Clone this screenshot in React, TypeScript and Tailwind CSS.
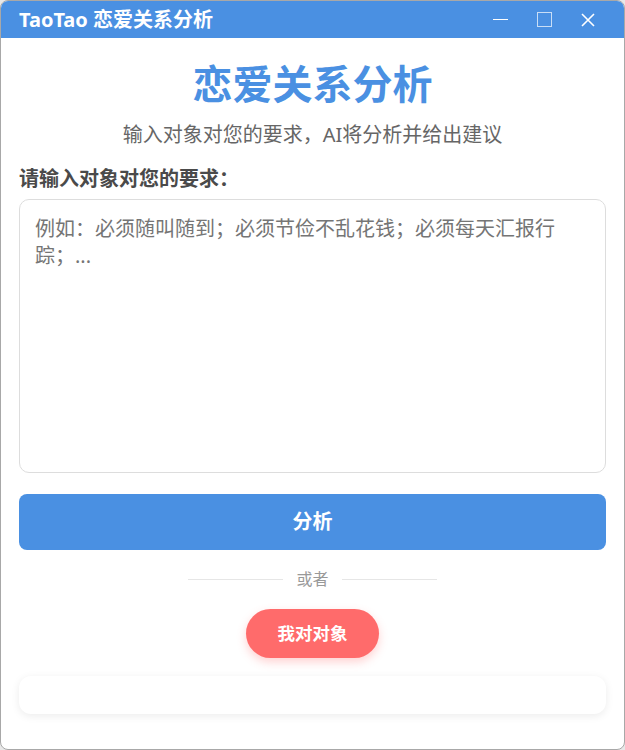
import React from 'react';

const font = { fontFamily: '"Noto Sans", "Noto Sans CJK SC", sans-serif' };

function TitleBar() {
  return (
    <div className="flex h-[37px] items-center bg-[#4a90e2] pl-[18px] pr-[14px] text-white">
      <div className="flex-1 text-[20px] font-bold leading-none">TaoTao 恋爱关系分析</div>
      <div className="flex h-full items-center">
        <div className="flex h-full w-[44px] items-center justify-center">
          <div className="h-px w-[15px] bg-white" />
        </div>
        <div className="flex h-full w-[44px] items-center justify-center">
          <div className="h-[15px] w-[15px] border border-white/70" />
        </div>
        <div className="flex h-full w-[44px] items-center justify-center">
          <svg width="14" height="14" viewBox="0 0 14 14" fill="none" stroke="white" strokeWidth="1.6">
            <path d="M1 1 L13 13 M13 1 L1 13" />
          </svg>
        </div>
      </div>
    </div>
  );
}

export default function App() {
  return (
    <div className="h-[750px] w-[625px] bg-[#e8e8e8]" style={font}>
      <div className="flex h-full w-full flex-col overflow-hidden rounded-[8px] border border-[#a8a8a8] bg-white">
        <TitleBar />
        <div className="flex flex-1 flex-col px-[18px]">
          <h1 className="mt-[22px] text-center text-[40px] font-bold leading-[48px] text-[#4a90e2]">
            恋爱关系分析
          </h1>
          <p className="mt-[13px] text-center text-[20px] leading-[27px] text-[#666]">
            输入对象对您的要求，AI将分析并给出建议
          </p>
          <label className="mt-[17px] text-[20px] font-bold leading-[27px] text-[#4a4a4a]">
            请输入对象对您的要求：
          </label>
          <textarea
            className="mt-[7px] h-[274px] w-full resize-none rounded-[10px] border border-[#dddddd] px-[15px] py-[15px] text-[20px] leading-[27px] text-[#333] outline-none placeholder:text-[#757575]"
            placeholder="例如：必须随叫随到；必须节俭不乱花钱；必须每天汇报行踪；..."
          />
          <button className="mt-[21px] h-[56px] w-full rounded-[8px] bg-[#4a90e2] text-[20px] font-bold text-white">
            分析
          </button>
          <div className="mt-[19px] flex h-[20px] items-center justify-center gap-[13px]">
            <div className="h-px w-[95px] bg-[#e6e6e6]" />
            <span className="text-[16px] leading-none text-[#999]">或者</span>
            <div className="h-px w-[95px] bg-[#e6e6e6]" />
          </div>
          <div className="mt-[20px] flex justify-center">
            <button className="h-[49px] w-[133px] rounded-full bg-[#ff6b6b] text-[17.5px] font-bold text-white shadow-[0_4px_10px_rgba(255,107,107,0.3)]">
              我对对象
            </button>
          </div>
          <div className="mt-[18px] h-[38px] w-full rounded-[12px] bg-white shadow-[0_2px_8px_rgba(0,0,0,0.08)]" />
        </div>
      </div>
    </div>
  );
}
